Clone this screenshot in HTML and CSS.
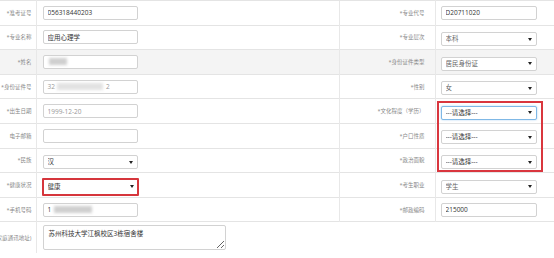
FILE: index.html
```html
<!DOCTYPE html>
<html lang="zh-CN">
<head>
  <meta charset="UTF-8">
  <title>考生信息</title>
  <link rel="stylesheet" href="styles.css">
</head>
<body>
  <div class="page">
    <table class="form-table">
      <colgroup>
        <col class="c-lbl">
        <col class="c-fld">
        <col class="c-lbl2">
        <col class="c-fld2">
      </colgroup>
      <tr>
        <td class="lbl">*准考证号</td>
        <td class="fld"><input class="ctl" value="056318440203"></td>
        <td class="lbl lbl-r">*专业代号</td>
        <td class="fld fld-r"><input class="ctl" value="D20711020"></td>
      </tr>
      <tr>
        <td class="lbl">*专业名称</td>
        <td class="fld"><input class="ctl" value="应用心理学"></td>
        <td class="lbl lbl-r">*专业层次</td>
        <td class="fld fld-r"><span class="sel"><select class="ctl muted"><option>本科</option></select></span></td>
      </tr>
      <tr class="hover">
        <td class="lbl">*姓名</td>
        <td class="fld"><div class="ctl fake"><span class="blur w-name"></span></div></td>
        <td class="lbl lbl-r">*身份证件类型</td>
        <td class="fld fld-r"><span class="sel"><select class="ctl muted"><option>居民身份证</option></select></span></td>
      </tr>
      <tr>
        <td class="lbl">*身份证件号</td>
        <td class="fld"><div class="ctl fake off">32<span class="blur w-id"></span>2</div></td>
        <td class="lbl lbl-r">*性别</td>
        <td class="fld fld-r"><span class="sel"><select class="ctl muted"><option>女</option></select></span></td>
      </tr>
      <tr>
        <td class="lbl">*出生日期</td>
        <td class="fld"><input class="ctl off" value="1999-12-20" disabled></td>
        <td class="lbl lbl-r">*文化程度（学历）</td>
        <td class="fld fld-r"><span class="sel"><select class="ctl focus"><option>---请选择---</option></select></span></td>
      </tr>
      <tr>
        <td class="lbl">电子邮箱</td>
        <td class="fld"><input class="ctl" value=""></td>
        <td class="lbl lbl-r">*户口性质</td>
        <td class="fld fld-r"><span class="sel"><select class="ctl"><option>---请选择---</option></select></span></td>
      </tr>
      <tr>
        <td class="lbl">*民族</td>
        <td class="fld"><span class="sel"><select class="ctl"><option>汉</option></select></span></td>
        <td class="lbl lbl-r">*政治面貌</td>
        <td class="fld fld-r"><span class="sel"><select class="ctl"><option>---请选择---</option></select></span></td>
      </tr>
      <tr>
        <td class="lbl">*健康状况</td>
        <td class="fld"><span class="sel"><select class="ctl marked"><option>健康</option></select></span></td>
        <td class="lbl lbl-r">*考生职业</td>
        <td class="fld fld-r"><span class="sel"><select class="ctl muted"><option>学生</option></select></span></td>
      </tr>
      <tr>
        <td class="lbl">*手机号码</td>
        <td class="fld"><div class="ctl fake">1<span class="blur w-tel"></span></div></td>
        <td class="lbl lbl-r">*邮政编码</td>
        <td class="fld fld-r"><input class="ctl" value="215000"></td>
      </tr>
      <tr class="last">
        <td class="lbl"><div class="lbl-wrap">*家庭通讯地址)</div></td>
        <td class="fld" colspan="3"><textarea class="ctl area">苏州科技大学江枫校区3栋宿舍楼</textarea></td>
      </tr>
    </table>
    <!-- annotation box around the three empty selects -->
    <div class="mark-box"></div>
  </div>
</body>
</html>
```

FILE: styles.css
```css
body {
  margin: 0;
  background: #fff;
  font-family: "Open Sans", "Noto Sans CJK SC", sans-serif;
  color: #333;
}
.page {
  position: relative;
  width: 554px;
  height: 258px;
  overflow: hidden;
}
.form-table {
  width: 554px;
  table-layout: fixed;
  border-collapse: collapse;
}
.c-lbl { width: 36px; }
.c-fld { width: 303px; }
.c-lbl2 { width: 96px; }
.c-fld2 { width: 119px; }
.form-table td {
  height: 23.6px;
  padding: 0;
  border-top: 1px solid #e4e4e4;
  vertical-align: middle;
}
.form-table tr.hover td {
  background: #f4f4f4;
}
.lbl {
  text-align: right;
  padding-right: 4px !important;
  font-size: 5.5px;
  color: #888;
  white-space: nowrap;
  border-right: 1px solid #e8e8e8;
}
.lbl-r {
  padding-right: 10px !important;
  border-left: 1px solid #e8e8e8;
}
.fld {
  padding-left: 6px !important;
}
.fld-r {
  padding-left: 5px !important;
}
.lbl-wrap {
  display: flex;
  justify-content: flex-end;
}
.ctl {
  box-sizing: border-box;
  display: block;
  width: 95px;
  height: 14px;
  margin: 0;
  padding: 0 4px;
  border: 1px solid #d2d2d2;
  border-radius: 2px;
  background: #fff;
  font-family: inherit;
  font-size: 6.5px;
  line-height: 12px;
  color: #333;
  outline: none;
}
.fld-r .ctl {
  width: 96px;
}
.fake {
  display: flex;
  align-items: center;
  white-space: nowrap;
}
.off {
  color: #999;
  background: #fff;
}
.blur {
  display: inline-block;
  height: 7px;
  background: #cfcfcf;
  filter: blur(1.5px);
}
.w-name { width: 18px; margin-left: 1px; }
.w-id { width: 46px; margin: 0 3px 0 2px; background: #e2e2e2; }
.w-tel { width: 38px; margin-left: 3px; }
.sel {
  position: relative;
  display: inline-block;
  vertical-align: middle;
}
.sel select {
  -webkit-appearance: none;
  appearance: none;
  padding-left: 4px;
}
.sel::after {
  content: "";
  position: absolute;
  right: 5px;
  top: 5.5px;
  border-left: 2px solid transparent;
  border-right: 2px solid transparent;
  border-top: 3px solid #222;
}
.muted {
  color: #666;
}
.focus {
  border-color: #7fb8e6;
  box-shadow: 0 0 2px rgba(102, 175, 233, 0.6);
}
.marked {
  width: 97px;
  height: 18px;
  margin-left: -1px;
  border: 2px solid #d6363c;
  border-radius: 1px;
}
.sel:has(.marked)::after {
  top: 7.5px;
}
.area {
  width: 183px;
  height: 25px;
  padding: 3px 5px;
  line-height: 9px;
  resize: both;
  margin-top: 3px;
  margin-bottom: 3px;
}
.form-table tr.last td {
  height: 31px;
}
.form-table tr.last .fld {
  vertical-align: top;
}
.mark-box {
  position: absolute;
  left: 437px;
  top: 101px;
  width: 106px;
  height: 71px;
  box-sizing: border-box;
  border: 2px solid #d9363e;
}
```
